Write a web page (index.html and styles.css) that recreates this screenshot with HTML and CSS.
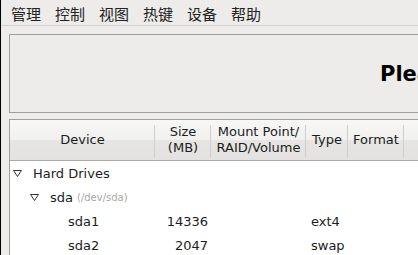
FILE: index.html
```html
<!DOCTYPE html>
<html lang="zh">

<head>
    <meta charset="UTF-8">
    <meta name="viewport" content="width=device-width, initial-scale=1.0">
    <title>Partitioning</title>
    <link rel="stylesheet" href="styles.css">
</head>

<body>
    <div class="window">
        <!-- Menu bar -->
        <div class="menubar">
            <span class="menu-item">管理</span>
            <span class="menu-item">控制</span>
            <span class="menu-item">视图</span>
            <span class="menu-item">热键</span>
            <span class="menu-item">设备</span>
            <span class="menu-item">帮助</span>
        </div>

        <div class="content">
            <!-- Title panel -->
            <div class="title-panel">
                <h1>Please Select A Device</h1>
            </div>

            <!-- Device tree -->
            <div class="tree">
                <div class="tree-header">
                    <div class="col-head">Device</div>
                    <div class="col-head">Size<br>(MB)</div>
                    <div class="col-head">Mount Point/<br>RAID/Volume</div>
                    <div class="col-head">Type</div>
                    <div class="col-head">Format</div>
                    <div class="col-head last"></div>
                </div>

                <div class="tree-row">
                    <div class="cell name level-0">
                        <span class="expander">
                            <svg width="9" height="7" viewBox="0 0 9 7"><path d="M0.5 0.5 H8.5 L4.5 6.5 Z" fill="none" stroke="#333" stroke-width="1"/></svg>
                        </span>
                        Hard Drives
                    </div>
                </div>

                <div class="tree-row">
                    <div class="cell name level-1">
                        <span class="expander">
                            <svg width="9" height="7" viewBox="0 0 9 7"><path d="M0.5 0.5 H8.5 L4.5 6.5 Z" fill="none" stroke="#333" stroke-width="1"/></svg>
                        </span>
                        sda <span class="dev-path">(/dev/sda)</span>
                    </div>
                </div>

                <div class="tree-row">
                    <div class="cell name level-2">sda1</div>
                    <div class="cell size">14336</div>
                    <div class="cell"></div>
                    <div class="cell type">ext4</div>
                    <div class="cell"></div>
                </div>

                <div class="tree-row">
                    <div class="cell name level-2">sda2</div>
                    <div class="cell size">2047</div>
                    <div class="cell"></div>
                    <div class="cell type">swap</div>
                    <div class="cell"></div>
                </div>
            </div>
        </div>
    </div>
</body>

</html>
```

FILE: styles.css
```css
/* General page */
body {
    margin: 0;
    background-color: #edecea;
    font-family: 'DejaVu Sans', sans-serif;
    color: #1c1c1c;
    overflow: hidden;
    height: 255px;
}

.window {
    border-left: 1px solid #000;
    width: 900px;
    height: 255px;
    display: flex;
    flex-direction: column;
    overflow: hidden;
}

/* Menu bar */
.menubar {
    display: flex;
    gap: 14px;
    height: 25px;
    flex-shrink: 0;
    padding-left: 10px;
    border-bottom: 1px solid #d4d1cc;
    align-items: center;
    font-family: 'Noto Sans CJK SC', sans-serif;
    font-size: 15px;
    color: #222;
}

.menu-item {
    line-height: 25px;
    padding-top: 1px;
}

.content {
    flex: 1;
    display: flex;
    flex-direction: column;
    min-height: 0;
    padding: 8px 0 0 8px;
}

/* Title panel */
.title-panel {
    height: 77px;
    flex-shrink: 0;
    border: 1px solid #9e9e9c;
    border-right: none;
    display: flex;
    align-items: center;
    padding-left: 370px;
}

h1 {
    margin: 0;
    font-size: 21px;
    font-weight: bold;
    color: #000;
    white-space: nowrap;
}

/* Device tree */
.tree {
    flex: 1;
    min-height: 0;
    overflow: hidden;
    margin-top: 6px;
    border-top: 1px solid #9e9e9c;
    border-left: 1px solid #9e9e9c;
    background-color: #fff;
}

.tree-header,
.tree-row {
    display: grid;
    grid-template-columns: 145px 56px 95px 42px 56px 1fr;
}

.tree-header {
    height: 40px;
    border-bottom: 1px solid #a9a9a7;
    background: linear-gradient(#f7f7f6 0%, #f0f0ef 50%, #e6e5e3 50%, #e3e2e0 100%);
    font-size: 13px;
    line-height: 16px;
}

.col-head {
    position: relative;
    display: flex;
    align-items: center;
    justify-content: center;
    text-align: center;
}

.col-head::after {
    content: "";
    position: absolute;
    right: 0;
    top: 5px;
    bottom: 2px;
    width: 1px;
    background-color: #cfcecc;
}

.col-head.last::after {
    display: none;
}

.tree-row {
    height: 24px;
    font-size: 13px;
}

.cell {
    display: flex;
    align-items: center;
    white-space: nowrap;
    padding-top: 1px;
}

.tree-row .cell.name:only-child {
    grid-column: 1 / -1;
}

.level-0 {
    padding-left: 3px;
}

.level-1 {
    padding-left: 20px;
}

.level-2 {
    padding-left: 58px;
}

.expander {
    width: 20px;
    display: flex;
    align-items: center;
}

.expander svg {
    display: block;
}

.dev-path {
    font-size: 10px;
    color: #a8a8a8;
    margin-left: 4px;
}

.cell.size {
    justify-content: flex-end;
    padding-right: 3px;
}

.cell.type {
    padding-left: 5px;
}
```
